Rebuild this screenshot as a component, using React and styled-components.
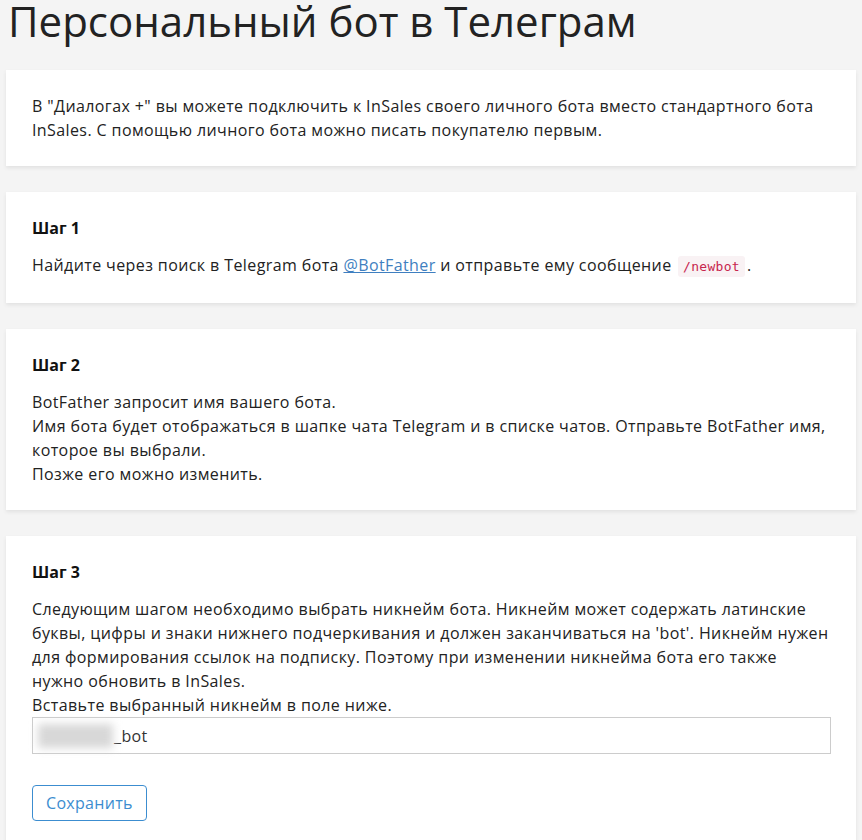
import styled, { createGlobalStyle } from "styled-components";

const GlobalStyle = createGlobalStyle`
  body {
    margin: 0;
    background: #f4f4f4;
    font-family: "Open Sans", "Liberation Sans", sans-serif;
    color: #222;
  }
`;

const Page = styled.div`
  padding: 0 6px 40px;
`;

const Title = styled.h1`
  margin: 0 0 0 2px;
  font-size: 42px;
  line-height: 42px;
  font-weight: 400;
  color: #222;
  height: 70px;
`;

const Stack = styled.div`
  display: flex;
  flex-direction: column;
  gap: 26px;
`;

const Card = styled.section`
  background: #fff;
  padding: 24px 25px 24px 26px;
  box-shadow: 0 2px 4px rgba(0, 0, 0, 0.08);
  font-size: 16px;
  line-height: 24px;
  letter-spacing: 0.4px;
`;

const StepTitle = styled.h3`
  margin: 0 0 13px;
  font-size: 16px;
  line-height: 24px;
  font-weight: 700;
  letter-spacing: 0;
  color: #111;
`;

const Text = styled.p`
  margin: 0;
`;

const Link = styled.a`
  color: #3f7fc0;
  text-decoration: underline;
`;

const Code = styled.code`
  font-family: "DejaVu Sans Mono", "Liberation Mono", monospace;
  font-size: 13px;
  letter-spacing: 0.3px;
  color: #c7254e;
  background: #f9f2f4;
  padding: 3px 5px;
  border-radius: 3px;
  margin: 0 2px 0 2px;
`;

const Field = styled.div`
  display: flex;
  align-items: center;
  height: 35px;
  border: 1px solid #ccc;
  padding: 0 5px;
  color: #333;
`;

const Masked = styled.span`
  display: inline-block;
  width: 75px;
  height: 24px;
  background: #d8d8d8;
  filter: blur(4px);
  margin-right: 1px;
`;

const SaveButton = styled.button`
  margin-top: 31px;
  height: 36px;
  padding: 0 13px;
  background: #fff;
  border: 1px solid #3c8dd0;
  border-radius: 4px;
  color: #3c8dd0;
  font-family: inherit;
  font-size: 16px;
  letter-spacing: 0.3px;
  cursor: pointer;
`;

export default function App() {
  return (
    <Page>
      <GlobalStyle />
      <Title>Персональный бот в Телеграм</Title>
      <Stack>
        <Card>
          <Text>
            В "Диалогах +" вы можете подключить к InSales своего личного бота вместо стандартного бота
            InSales. С помощью личного бота можно писать покупателю первым.
          </Text>
        </Card>
        <Card>
          <StepTitle>Шаг 1</StepTitle>
          <Text>
            Найдите через поиск в Telegram бота <Link href="#">@BotFather</Link> и отправьте ему
            сообщение <Code>/newbot</Code>.
          </Text>
        </Card>
        <Card>
          <StepTitle>Шаг 2</StepTitle>
          <Text>
            BotFather запросит имя вашего бота.
            <br />
            Имя бота будет отображаться в шапке чата Telegram и в списке чатов. Отправьте BotFather имя,
            которое вы выбрали.
            <br />
            Позже его можно изменить.
          </Text>
        </Card>
        <Card>
          <StepTitle>Шаг 3</StepTitle>
          <Text>
            Следующим шагом необходимо выбрать никнейм бота. Никнейм может содержать латинские буквы,
            цифры и знаки нижнего подчеркивания и должен заканчиваться на 'bot'. Никнейм нужен для
            формирования ссылок на подписку. Поэтому при изменении никнейма бота его также нужно обновить
            в InSales.
            <br />
            Вставьте выбранный никнейм в поле ниже.
          </Text>
          <Field>
            <Masked />
            _bot
          </Field>
          <SaveButton>Сохранить</SaveButton>
        </Card>
      </Stack>
    </Page>
  );
}
